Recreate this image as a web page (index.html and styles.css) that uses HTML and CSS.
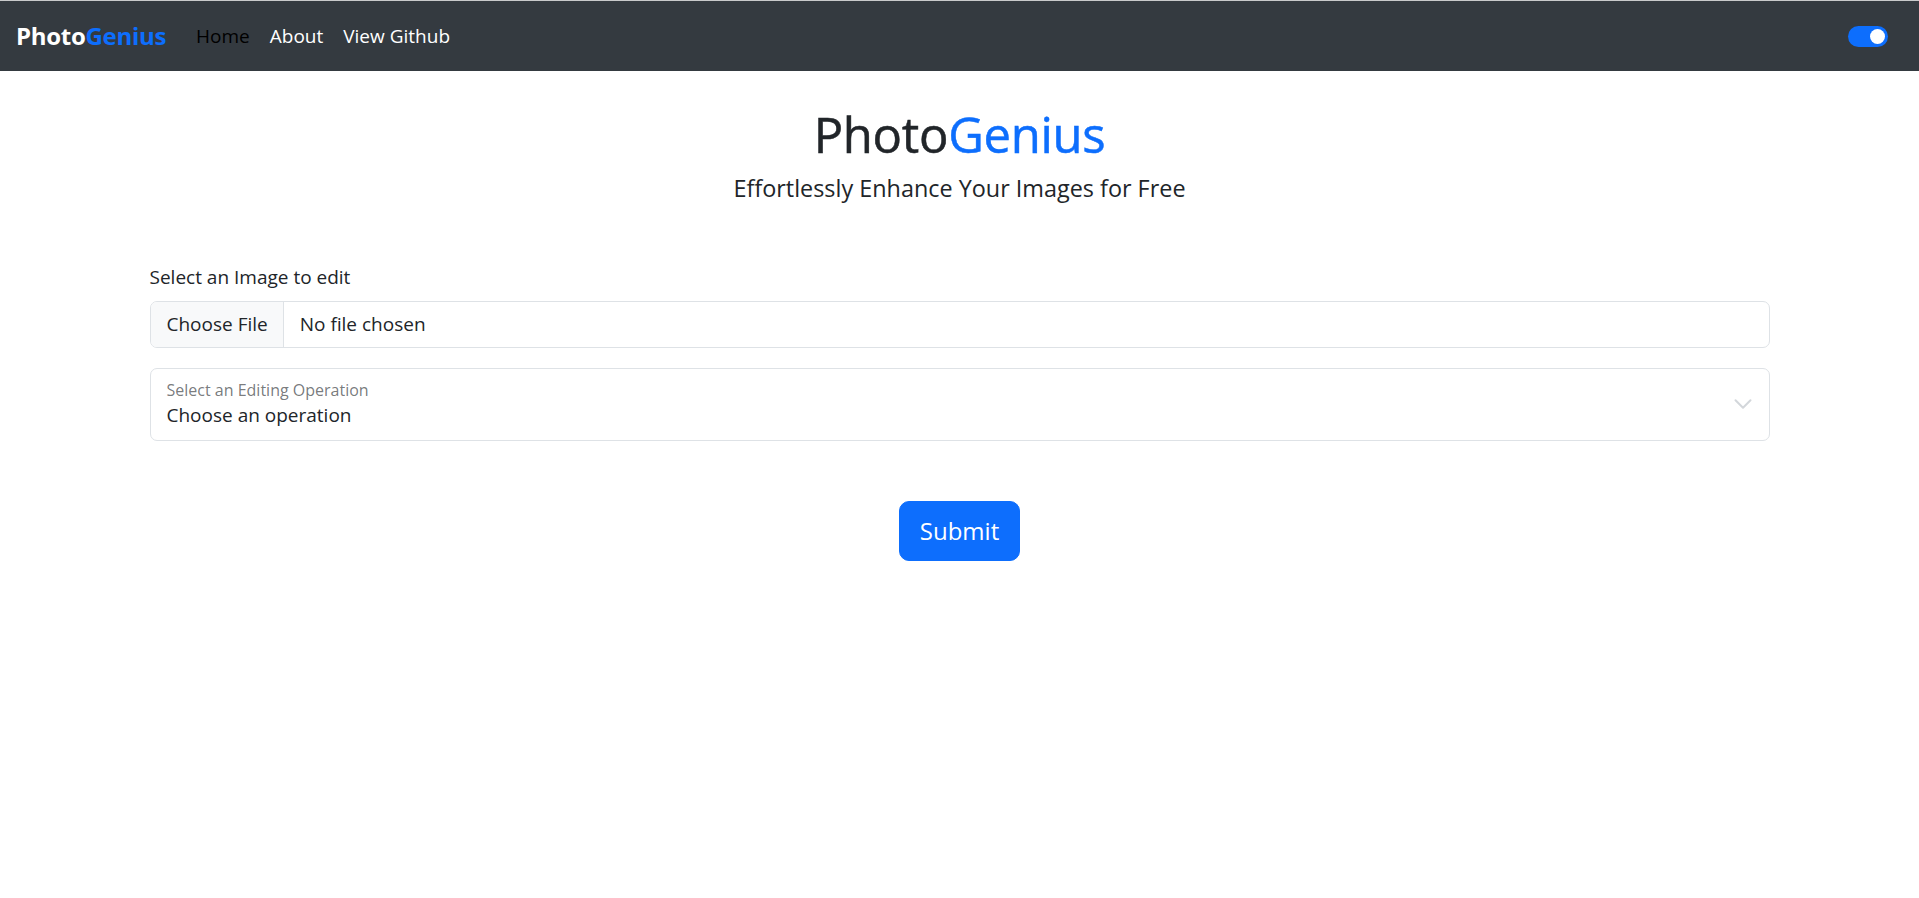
FILE: index.html
```html
<!DOCTYPE html>
<html lang="en">
<head>
<meta charset="utf-8">
<title>PhotoGenius</title>
<link rel="stylesheet" href="styles.css">
</head>
<body>
<nav class="navbar">
  <div class="navbar-left">
    <a class="brand" href="#">Photo<span class="accent">Genius</span></a>
    <ul class="nav">
      <li><a class="nav-link active" href="#">Home</a></li>
      <li><a class="nav-link" href="#">About</a></li>
      <li><a class="nav-link" href="#">View Github</a></li>
    </ul>
  </div>
  <div class="switch" role="switch" aria-checked="true"><span class="knob"></span></div>
</nav>

<main class="container">
  <header class="hero">
    <h1 class="title">Photo<span class="accent">Genius</span></h1>
    <p class="lead">Effortlessly Enhance Your Images for Free</p>
  </header>

  <form class="form">
    <label class="form-label">Select an Image to edit</label>
    <div class="file-input">
      <span class="file-btn">Choose File</span>
      <span class="file-name">No file chosen</span>
    </div>

    <div class="floating-select">
      <span class="floating-label">Select an Editing Operation</span>
      <span class="select-value">Choose an operation</span>
      <svg class="chevron" viewBox="0 0 16 16" width="20" height="20"><path fill="none" stroke="currentColor" stroke-linecap="round" stroke-linejoin="round" stroke-width="1.6" d="m2 5 6 6 6-6"/></svg>
    </div>

    <div class="submit-row">
      <button type="button" class="btn-submit">Submit</button>
    </div>
  </form>
</main>
</body>
</html>
```

FILE: styles.css
```css
* { box-sizing: border-box; }

html, body {
  margin: 0;
  padding: 0;
  background: #fff;
}

body {
  font-family: "Open Sans", "Noto Sans", sans-serif;
  font-size: 20px;
  line-height: 1.5;
  color: #212529;
}

.accent { color: #0d6efd; }

/* Navbar */
.navbar {
  height: 71px;
  border-top: 1px solid #c9cacb;
  background: #343a40;
  display: flex;
  align-items: center;
  justify-content: space-between;
  padding: 0 31px 0 16px;
}

.navbar-left {
  display: flex;
  align-items: center;
}

.brand {
  font-size: 24px;
  font-weight: 700;
  color: #fff;
  text-decoration: none;
  margin-right: 20px;
  letter-spacing: -0.3px;
}

.nav {
  list-style: none;
  display: flex;
  margin: 0;
  padding: 0;
}

.nav-link {
  display: block;
  padding: 10px 10px;
  font-size: 19px;
  color: #fff;
  text-decoration: none;
}

.nav-link.active { color: #000; }

.switch {
  width: 40px;
  height: 21px;
  border-radius: 11px;
  background: #0d6efd;
  display: flex;
  align-items: center;
  justify-content: flex-end;
  padding: 0 3px;
  margin-top: 1px;
}

.knob {
  width: 15px;
  height: 15px;
  border-radius: 50%;
  background: #fff;
}

/* Content */
.container {
  max-width: 1650px;
  margin: 0 auto;
  padding: 0 15px;
}

.hero {
  text-align: center;
  padding-top: 33px;
}

.title {
  margin: 0;
  font-size: 49px;
  font-weight: 500;
  line-height: 60px;
  letter-spacing: -0.3px;
  -webkit-text-stroke: 0.5px currentColor;
}

.lead {
  margin: 6px 0 0;
  font-size: 23.4px;
  font-weight: 400;
  line-height: 37px;
}

.form {
  margin-top: 55px;
  display: flex;
  flex-direction: column;
}

.form-label {
  font-size: 19px;
  line-height: 30px;
  margin-bottom: 9px;
}

.file-input {
  display: flex;
  height: 47px;
  border: 1px solid #dee2e6;
  border-radius: 7px;
  overflow: hidden;
  font-size: 19px;
}

.file-btn {
  display: flex;
  align-items: center;
  padding: 0 15px 0 16px;
  background: #f8f9fa;
  border-right: 1px solid #dee2e6;
}

.file-name {
  display: flex;
  align-items: center;
  padding: 0 16px;
}

.floating-select {
  position: relative;
  margin-top: 20px;
  height: 73px;
  border: 1px solid #dee2e6;
  border-radius: 7px;
  display: flex;
  flex-direction: column;
  padding: 10px 16px 0;
}

.floating-label {
  font-size: 16px;
  line-height: 22px;
  color: rgba(33, 37, 41, 0.62);
}

.select-value {
  font-size: 19px;
  line-height: 28px;
}

.chevron {
  position: absolute;
  right: 16px;
  top: 25px;
  color: #d3d7db;
}

.submit-row {
  display: flex;
  justify-content: center;
  margin-top: 60px;
}

.btn-submit {
  font-family: inherit;
  font-size: 24px;
  line-height: 30px;
  color: #fff;
  background: #0d6efd;
  border: 1px solid #0d6efd;
  border-radius: 10px;
  padding: 14px 20px 14px;
  cursor: pointer;
}
```
